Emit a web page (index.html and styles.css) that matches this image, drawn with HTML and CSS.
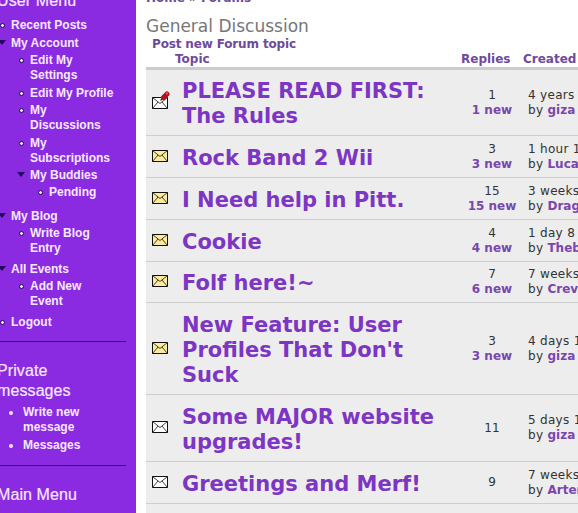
FILE: index.html
```html
<!DOCTYPE html>
<html lang="en">

<head>
    <meta charset="utf-8">
    <meta name="viewport" content="width=device-width, initial-scale=1.0">
    <title>General Discussion</title>
    <link rel="stylesheet" href="styles.css">
</head>

<body>
    <svg class="defs" width="0" height="0">
        <symbol id="env" viewBox="0 0 16 12">
            <path d="M.5 .5H15.5V11.5H.5Z" fill="currentColor" stroke="#111" />
            <path d="M.5 .5L8 6.5L15.5 .5M.5 11.5L6 5M15.5 11.5L10 5" fill="none" stroke="#111" stroke-width=".8" />
        </symbol>
    </svg>

    <div class="page">
        <aside class="sidebar">
            <h2 class="blockTitle">User Menu</h2>
            <ul class="menu">
                <li class="leaf"><a href="#">Recent Posts</a></li>
                <li class="open"><a href="#">My Account</a>
                    <ul class="account">
                        <li class="leaf"><a href="#">Edit My Settings</a></li>
                        <li class="leaf"><a href="#">Edit My Profile</a></li>
                        <li class="leaf"><a href="#">My Discussions</a></li>
                        <li class="leaf"><a href="#">My Subscriptions</a></li>
                        <li class="open"><a href="#">My Buddies</a>
                            <ul>
                                <li class="leaf"><a href="#">Pending</a></li>
                            </ul>
                        </li>
                    </ul>
                </li>
                <li class="open"><a href="#">My Blog</a>
                    <ul>
                        <li class="leaf"><a href="#">Write Blog Entry</a></li>
                    </ul>
                </li>
                <li class="open"><a href="#">All Events</a>
                    <ul>
                        <li class="leaf"><a href="#">Add New Event</a></li>
                    </ul>
                </li>
                <li class="leaf"><a href="#">Logout</a></li>
            </ul>
            <hr>
            <h2 class="blockTitle">Private messages</h2>
            <ul class="pmList">
                <li><a href="#">Write new message</a></li>
                <li><a href="#">Messages</a></li>
            </ul>
            <hr>
            <h2 class="blockTitle">Main Menu</h2>
        </aside>

        <main class="content">
            <p class="crumbs"><a href="#">Home</a> » <a href="#">Forums</a></p>
            <h1 class="forumName">General Discussion</h1>
            <a class="postNew" href="#">Post new Forum topic</a>

            <table class="topics">
                <thead>
                    <tr>
                        <th class="colIcon"></th>
                        <th class="colTopic"><a href="#">Topic</a></th>
                        <th class="colReplies"><a href="#">Replies</a></th>
                        <th class="colCreated"><a href="#">Created</a></th>
                    </tr>
                </thead>
                <tbody>
                    <tr class="h67">
                        <td class="icon">
                            <span class="pinWrap">
                                <svg class="env white"><use href="#env" /></svg>
                                <svg class="pin" viewBox="0 0 10 10"><path d="M3 7L.5 9.500" stroke="#5a2020" stroke-width="1.200" /><path d="M3.500 6.500L7 3" stroke="#b01018" stroke-width="5" stroke-linecap="round" /><circle cx="7" cy="2.500" r="1.200" fill="#ee4a50" /></svg>
                            </span>
                        </td>
                        <td class="title"><a href="#">PLEASE READ FIRST:<br>The Rules</a></td>
                        <td class="replies">1<br><a href="#">1 new</a></td>
                        <td class="created">4 years 8 months<br>by <a href="#">giza</a></td>
                    </tr>
                    <tr class="h42">
                        <td class="icon"><svg class="env yellow"><use href="#env" /></svg></td>
                        <td class="title"><a href="#">Rock Band 2 Wii</a></td>
                        <td class="replies">3<br><a href="#">3 new</a></td>
                        <td class="created">1 hour 12 min<br>by <a href="#">Lucas</a></td>
                    </tr>
                    <tr class="h42">
                        <td class="icon"><svg class="env yellow"><use href="#env" /></svg></td>
                        <td class="title"><a href="#">I Need help in Pitt.</a></td>
                        <td class="replies">15<br><a href="#">15 new</a></td>
                        <td class="created">3 weeks 2 days<br>by <a href="#">Dragon</a></td>
                    </tr>
                    <tr class="h42">
                        <td class="icon"><svg class="env yellow"><use href="#env" /></svg></td>
                        <td class="title"><a href="#">Cookie</a></td>
                        <td class="replies">4<br><a href="#">4 new</a></td>
                        <td class="created">1 day 8 hours<br>by <a href="#">Thebes</a></td>
                    </tr>
                    <tr class="h41">
                        <td class="icon"><svg class="env yellow"><use href="#env" /></svg></td>
                        <td class="title"><a href="#">Folf here!~</a></td>
                        <td class="replies">7<br><a href="#">6 new</a></td>
                        <td class="created">7 weeks 1 day<br>by <a href="#">Crevan</a></td>
                    </tr>
                    <tr class="h92">
                        <td class="icon"><svg class="env yellow"><use href="#env" /></svg></td>
                        <td class="title"><a href="#">New Feature: User<br>Profiles That Don't<br>Suck</a></td>
                        <td class="replies">3<br><a href="#">3 new</a></td>
                        <td class="created">4 days 12 hours<br>by <a href="#">giza</a></td>
                    </tr>
                    <tr class="h67">
                        <td class="icon"><svg class="env white"><use href="#env" /></svg></td>
                        <td class="title"><a href="#">Some MAJOR website<br>upgrades!</a></td>
                        <td class="replies">11</td>
                        <td class="created">5 days 19 hours<br>by <a href="#">giza</a></td>
                    </tr>
                    <tr class="h42">
                        <td class="icon"><svg class="env white"><use href="#env" /></svg></td>
                        <td class="title"><a href="#">Greetings and Merf!</a></td>
                        <td class="replies">9</td>
                        <td class="created">7 weeks 3 days<br>by <a href="#">Artemis</a></td>
                    </tr>
                    <tr class="h42">
                        <td colspan="4"></td>
                    </tr>
                </tbody>
            </table>
        </main>
    </div>
</body>

</html>
```

FILE: styles.css
```css
html,
body {
    margin: 0;
    height: 513px;
    overflow: hidden;
    background-color: #fff;
}

.defs {
    position: absolute;
}

.page {
    display: flex;
    height: 513px;
    overflow: hidden;
}

/* sidebar */
.sidebar {
    flex: 0 0 136px;
    box-sizing: border-box;
    padding: 0 10px 0 0;
    margin-top: -9px;
    height: 540px;
    background-color: #8a2be2;
    font-family: "Liberation Sans", Arial, sans-serif;
    font-size: 12px;
    font-weight: bold;
    line-height: 15px;
    color: #f8e8ff;
}

.sidebar a {
    color: #f8e8ff;
    text-decoration: none;
}

.blockTitle {
    margin: 0 0 0 -3px;
    font-size: 16px;
    line-height: 20px;
    font-weight: normal;
    -webkit-text-stroke: 0.2px #f8e8ff;
    letter-spacing: 0.1px;
    width: 70px;
}

.blockTitle:first-child,
.blockTitle:last-child {
    width: 120px;
}

.menu {
    margin: 5px 12px 0 0;
    padding: 0 0 0 11px;
    list-style: none;
}

.menu ul {
    margin: 0;
    padding: 0 0 0 19px;
    list-style: none;
}

.menu li {
    position: relative;
    padding: 2px 0 0;
}

.menu > li:first-child {
    padding-bottom: 1px;
}

.menu > li > ul {
    margin-bottom: 4px;
}

.menu > li > .account {
    margin-bottom: 7px;
}

.menu ul li:nth-child(even) {
    margin-top: 1px;
}

/* bullets sit in the list indent */
.leaf::before {
    content: "";
    position: absolute;
    left: -11px;
    top: 7px;
    width: 3px;
    height: 3px;
    border: 1px solid #1c0a55;
    border-radius: 50%;
    background-color: #f2e6ff;
}

.open::before {
    content: "";
    position: absolute;
    left: -13px;
    top: 6px;
    border-left: 4px solid transparent;
    border-right: 4px solid transparent;
    border-top: 5px solid #22095e;
}

.sidebar hr {
    margin: 11px 0 19px;
    border: none;
    border-top: 1px solid #2a0f5c;
}

.pmList {
    margin: 2px 12px 6px 0;
    padding: 0 0 0 23px;
}

.pmList li {
    padding: 2px 0 1px;
}

.pmList li::marker {
    color: #f2e6ff;
}

/* content */
.content {
    flex: 0 0 auto;
    width: 560px;
    margin: 0 0 0 10px;
    font-family: "DejaVu Sans", Verdana, sans-serif;
    font-size: 12px;
    color: #333;
}

.crumbs {
    margin: -9px 0 0;
    line-height: 15px;
    font-weight: bold;
}

.crumbs a {
    color: #6f4a9c;
    text-decoration: none;
}

.forumName {
    margin: 10px 0 0;
    font-size: 17px;
    line-height: 20px;
    font-weight: normal;
    color: #777;
}

.postNew {
    display: block;
    margin: 1px 0 0 6px;
    line-height: 15px;
    font-weight: bold;
    letter-spacing: -0.15px;
    color: #6f4a9c;
    text-decoration: none;
}

.topics {
    table-layout: fixed;
    width: 560px;
    border-collapse: collapse;
}

.topics th {
    padding: 0;
    height: 13px;
    line-height: 15px;
    text-align: left;
    border-bottom: 3px solid #ccc;
}

.topics th a {
    color: #6f4a9c;
    text-decoration: none;
}

.colIcon {
    width: 29px;
}

.colTopic {
    width: 280px;
}

.colReplies {
    width: 62px;
}

.topics th.colReplies {
    padding-left: 6px;
}

.topics td {
    background-color: #ededed;
    border-bottom: 1px solid #cfcfcf;
    padding: 0;
    vertical-align: middle;
}

.h67 { height: 67px; }
.h42 { height: 42px; }
.h41 { height: 41px; }
.h92 { height: 92px; }

.topics .icon {
    padding: 0 2px 2px 0;
    text-align: center;
    line-height: 0;
}

.env {
    width: 16px;
    height: 12px;
}

.yellow {
    color: #ffeb9c;
}

.white {
    color: #fff;
}

.pinWrap {
    position: relative;
    display: inline-block;
    padding-top: 3px;
}

.pin {
    position: absolute;
    right: -2px;
    top: -3px;
    width: 10px;
    height: 10px;
}

.topics .title {
    padding: 3px 0 0 7px;
    font-size: 21px;
    line-height: 25px;
    font-weight: bold;
}

.title a {
    color: #7d35c4;
    text-decoration: none;
}

.topics .replies {
    padding-left: 6px;
    text-align: center;
    line-height: 15px;
}

.replies a,
.created a {
    color: #7a46ad;
    font-weight: bold;
    letter-spacing: 0;
    text-decoration: none;
}

.topics .created {
    padding-left: 5px;
    line-height: 15px;
    letter-spacing: 0.3px;
    white-space: nowrap;
    overflow: hidden;
}
```
